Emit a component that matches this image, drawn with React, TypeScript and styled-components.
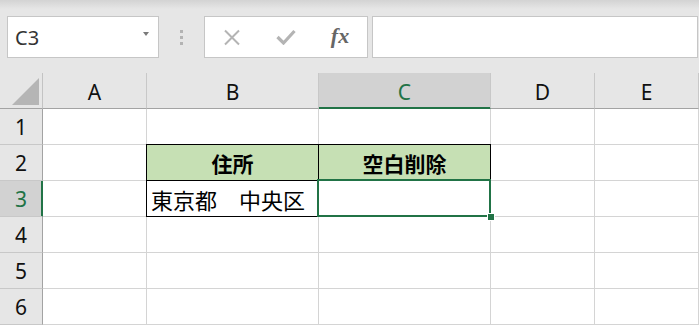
import React, { FC } from 'react'
import styled, { createGlobalStyle, css } from 'styled-components'

const green = '#217346'

const GlobalStyle = createGlobalStyle`
  html, body {
    margin: 0;
    padding: 0;
    background: #ffffff;
    overflow: hidden;
  }

  body {
    font-family: 'Noto Sans CJK JP', 'Noto Sans', sans-serif;
  }
`

const Window = styled.div`
  width: 699px;
  height: 325px;
  overflow: hidden;
  background: #ffffff;
`

const Toolbar = styled.div`
  display: flex;
  align-items: flex-start;
  height: 73px;
  box-sizing: border-box;
  padding: 16px 1px 0 7px;
  background: linear-gradient(#d3d3d3 0px, #e6e6e6 9px, #e6e6e6 100%);
`

const Box = styled.div`
  height: 42px;
  box-sizing: border-box;
  border: 1px solid #c6c6c6;
  background: #ffffff;
`

const NameBox = styled(Box)`
  width: 152px;
  display: flex;
  align-items: center;
  justify-content: space-between;
  padding: 0 9px 0 7px;
  font-family: 'Noto Sans', sans-serif;
  font-size: 20px;
  color: #333333;
`

const Caret = styled.span`
  width: 0;
  height: 0;
  margin-bottom: 6px;
  border-left: 3px solid transparent;
  border-right: 3px solid transparent;
  border-top: 4px solid #7a7a7a;
`

const Grip = styled.div`
  width: 45px;
  height: 42px;
  display: flex;
  flex-direction: column;
  align-items: center;
  justify-content: center;
  gap: 3px;

  span {
    width: 3px;
    height: 3px;
    background: #b3b3b3;
  }
`

const FormulaButtons = styled(Box)`
  width: 164px;
  display: grid;
  grid-template-columns: repeat(3, 1fr);
  align-items: center;
  justify-items: center;
`

const Fx = styled.span`
  font-family: 'Liberation Serif', serif;
  font-style: italic;
  font-weight: bold;
  font-size: 22px;
  color: #666666;
  margin-top: -2px;
`

const FormulaInput = styled(Box)`
  flex: 1;
  margin-left: 4px;
`

const Sheet = styled.div`
  display: grid;
  grid-template-columns: 43px 104px 172px 172px 104px 104px;
  grid-auto-rows: 36px;
`

const headerBase = css`
  display: flex;
  align-items: center;
  justify-content: center;
  box-sizing: border-box;
  background: #e6e6e6;
  font-family: 'Noto Sans', sans-serif;
  font-size: 21px;
  color: #111111;
`

const Corner = styled.div`
  ${headerBase};
  position: relative;
  border-right: 1px solid #c3c3c3;
  border-bottom: 1px solid #a3a3a3;

  &::after {
    content: '';
    position: absolute;
    right: 3px;
    bottom: 3px;
    width: 27px;
    height: 27px;
    background: #b5b5b5;
    clip-path: polygon(100% 0, 100% 100%, 0 100%);
  }
`

const ColHeader = styled.div<{ selected?: boolean }>`
  ${headerBase};
  border-right: 1px solid #c8c8c8;
  border-bottom: 1px solid #a3a3a3;
  padding-top: 2px;

  ${({ selected }) =>
    selected &&
    css`
      background: #d2d2d2;
      color: ${green};
      border-bottom-color: ${green};
      box-shadow: inset 0 -1px 0 ${green};
    `}
`

const RowHeader = styled.div<{ selected?: boolean }>`
  ${headerBase};
  border-right: 1px solid #a3a3a3;
  border-bottom: 1px solid #c8c8c8;
  padding-top: 1px;

  ${({ selected }) =>
    selected &&
    css`
      background: #d2d2d2;
      color: ${green};
      border-right-color: ${green};
      box-shadow: inset -1px 0 0 ${green};
    `}
`

const Cell = styled.div<{ heading?: boolean; boxed?: boolean; active?: boolean }>`
  position: relative;
  display: flex;
  align-items: center;
  box-sizing: border-box;
  padding: 1px 0 0 4px;
  border-right: 1px solid #d4d4d4;
  border-bottom: 1px solid #d4d4d4;
  font-size: 22px;
  color: #000000;
  white-space: pre;

  ${({ heading }) =>
    heading &&
    css`
      justify-content: center;
      padding-left: 0;
      background: #c6e0b4;
      font-weight: bold;
      font-size: 21px;
    `}

  ${({ boxed }) =>
    boxed &&
    css`
      &::before {
        content: '';
        position: absolute;
        inset: -1px;
        border: 1px solid #000000;
        pointer-events: none;
      }
    `}

  ${({ active }) =>
    active &&
    css`
      &::after {
        content: '';
        position: absolute;
        top: -2px;
        left: -2px;
        right: -1px;
        bottom: -1px;
        border: 2px solid ${green};
        pointer-events: none;
      }
    `}
`

const FillHandle = styled.span`
  position: absolute;
  right: -4px;
  bottom: -4px;
  width: 6px;
  height: 6px;
  background: ${green};
  outline: 1px solid #ffffff;
  z-index: 2;
`

const CrossIcon: FC = () => (
  <svg width="18" height="17" viewBox="0 0 18 17">
    <path d="M2 1.5 L16 15.5 M16 1.5 L2 15.5" stroke="#b4b4b4" strokeWidth="2" fill="none" />
  </svg>
)

const CheckIcon: FC = () => (
  <svg width="20" height="16" viewBox="0 0 20 16">
    <path d="M1.5 8 L7.5 14 L18.5 2" stroke="#b4b4b4" strokeWidth="3.2" fill="none" />
  </svg>
)

const columns = ['A', 'B', 'C', 'D', 'E']

type CellData = { text?: string; heading?: boolean; boxed?: boolean; active?: boolean }

const rows: CellData[][] = [
  [{}, {}, {}, {}, {}],
  [{}, { text: '住所', heading: true, boxed: true }, { text: '空白削除', heading: true, boxed: true }, {}, {}],
  [{}, { text: '東京都　中央区', boxed: true }, { boxed: true, active: true }, {}, {}],
  [{}, {}, {}, {}, {}],
  [{}, {}, {}, {}, {}],
  [{}, {}, {}, {}, {}],
]

export default function App() {
  return (
    <Window>
      <GlobalStyle />
      <Toolbar>
        <NameBox>
          C3
          <Caret />
        </NameBox>
        <Grip>
          <span />
          <span />
          <span />
        </Grip>
        <FormulaButtons>
          <CrossIcon />
          <CheckIcon />
          <Fx>fx</Fx>
        </FormulaButtons>
        <FormulaInput />
      </Toolbar>
      <Sheet>
        <Corner />
        {columns.map((c) => (
          <ColHeader key={c} selected={c === 'C'}>
            {c}
          </ColHeader>
        ))}
        {rows.map((row, r) => (
          <React.Fragment key={r}>
            <RowHeader selected={r === 2}>{r + 1}</RowHeader>
            {row.map((cell, c) => (
              <Cell key={c} heading={cell.heading} boxed={cell.boxed} active={cell.active}>
                {cell.text}
                {cell.active && <FillHandle />}
              </Cell>
            ))}
          </React.Fragment>
        ))}
      </Sheet>
    </Window>
  )
}
